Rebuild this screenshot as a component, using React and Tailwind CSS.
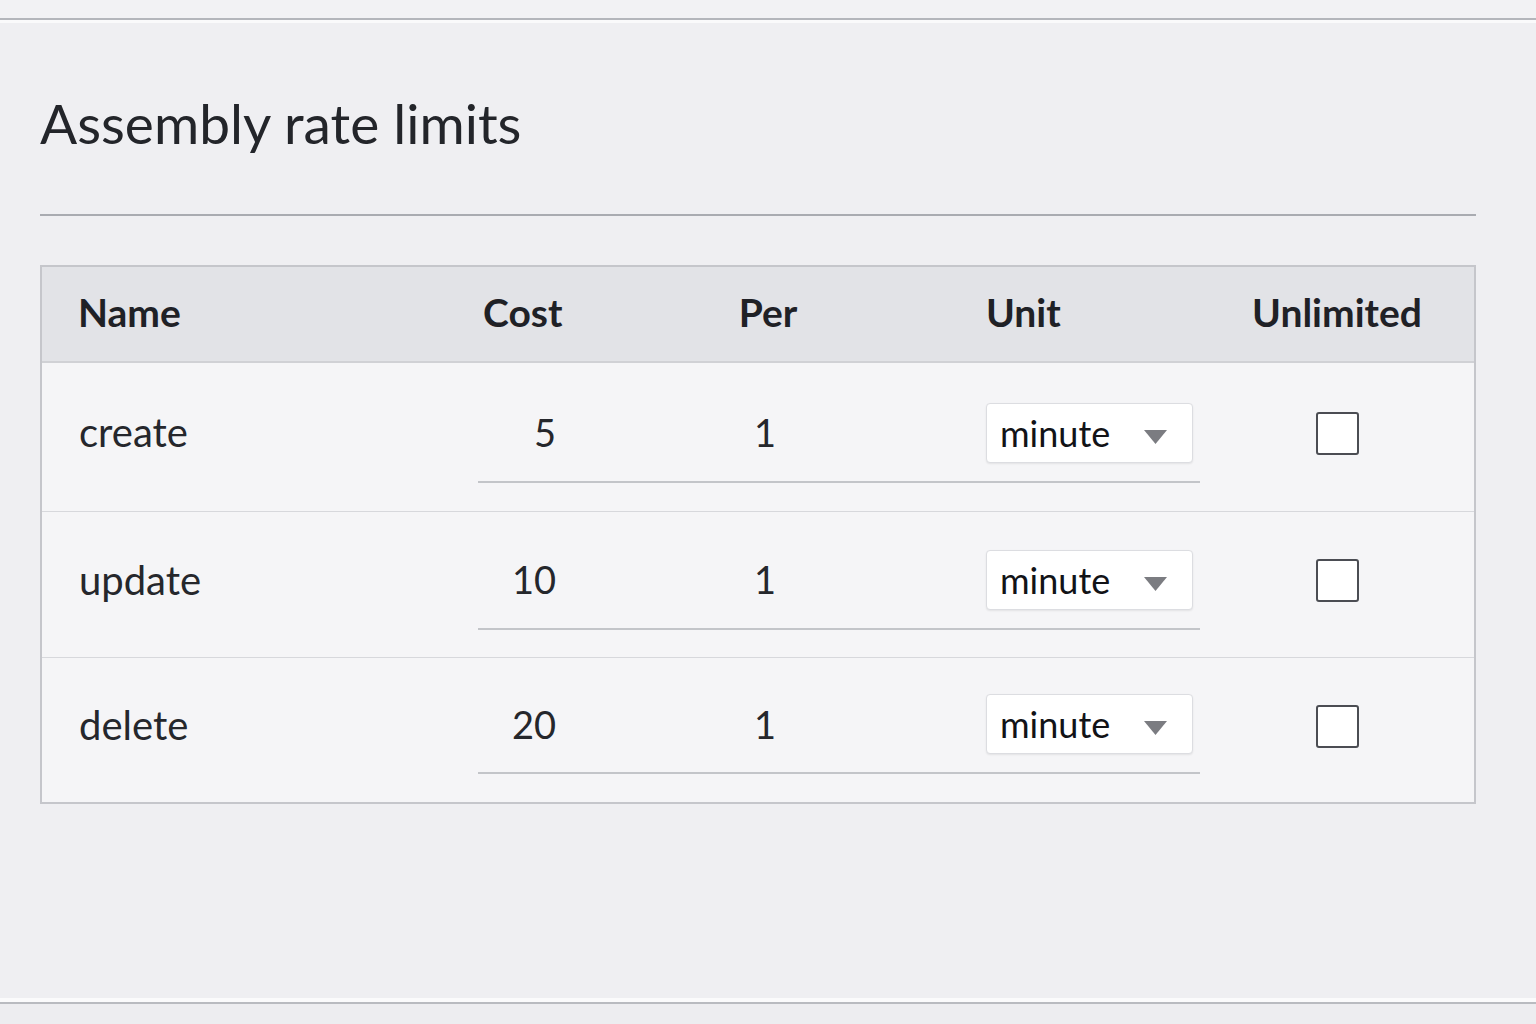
const ROWS = [
  { name: "create", cost: "5", per: "1", unit: "minute", h: "h-[149px]", sub: "h-[120px] pt-[21px]" },
  { name: "update", cost: "10", per: "1", unit: "minute", h: "h-[146px]", sub: "h-[118px] pt-[19px]" },
  { name: "delete", cost: "20", per: "1", unit: "minute", h: "h-[144px]", sub: "h-[116px] pt-[18px]" },
];

const font = { fontFamily: "Lato, 'Noto Sans', sans-serif" };

function Select({ value }) {
  return (
    <div className="ml-[114px] w-[207px] h-[60px] bg-white border border-[#dcdde1] rounded-[4px] shadow-[0_1px_2px_rgba(0,0,0,0.08)] flex items-center justify-between pl-[13px] pr-[25px]">
      <span className="text-[36px] leading-none text-[#121317]">{value}</span>
      <svg width="23" height="14" viewBox="0 0 23 14" className="mt-[8px]">
        <path d="M0 0 L23 0 L11.5 14 Z" fill="#7b7c81" />
      </svg>
    </div>
  );
}

function Row({ row, last }) {
  return (
    <div
      className={`grid grid-cols-[436px_722px_1fr] ${row.h} bg-[#f5f5f7] ${
        last ? "" : "border-b border-[#d7d8dc]"
      }`}
    >
      <div className="flex items-center pl-[37px] pb-[10px] text-[40px] text-[#25272c]">{row.name}</div>
      <div
        className={`self-start grid grid-cols-[180px_214px_1fr] items-center ${row.sub} border-b-2 border-[#c3c5c9] text-[38px] text-[#25272c]`}
      >
        <span className="w-[78px] text-right">{row.cost}</span>
        <span className="text-center">{row.per}</span>
        <Select value={row.unit} />
      </div>
      <div className="flex items-center justify-center pb-[8px]">
        <div className="w-[43px] h-[43px] bg-white border-2 border-[#4b4d53] rounded-[3px]" />
      </div>
    </div>
  );
}

export default function App() {
  return (
    <div className="w-full h-[1024px] bg-[#efeff2] flex flex-col" style={font}>
      <div className="h-[18px] bg-[#f2f2f4]" />
      <div className="h-[2px] bg-[#b4b6bb]" />
      <div className="h-[3px] bg-[#fafafb]" />

      <main className="flex-1 pl-[40px] pr-[60px]">
        <h1 className="mt-[70px] text-[55px] leading-[60px] text-[#23252a]">Assembly rate limits</h1>
        <div className="mt-[61px] h-[2px] bg-[#a9abb1]" />

        <div className="mt-[49px] border-2 border-[#c5c6cb]">
          <div className="grid grid-cols-[436px_180px_214px_328px_1fr] h-[96px] bg-[#e2e3e7] border-b-2 border-[#d0d1d5] items-center pb-[3px] text-[39px] font-bold text-[#1f2126]">
            <div className="pl-[36px]">Name</div>
            <div className="pl-[5px]">Cost</div>
            <div className="text-center pl-[6px]">Per</div>
            <div className="pl-[114px]">Unit</div>
            <div className="text-center">Unlimited</div>
          </div>
          {ROWS.map((row, i) => (
            <Row key={row.name} row={row} last={i === ROWS.length - 1} />
          ))}
        </div>
      </main>

      <div className="h-[4px] bg-[#fbfbfc]" />
      <div className="h-[2px] bg-[#b9bbc0]" />
      <div className="h-[20px] bg-[#ededf0]" />
    </div>
  );
}
